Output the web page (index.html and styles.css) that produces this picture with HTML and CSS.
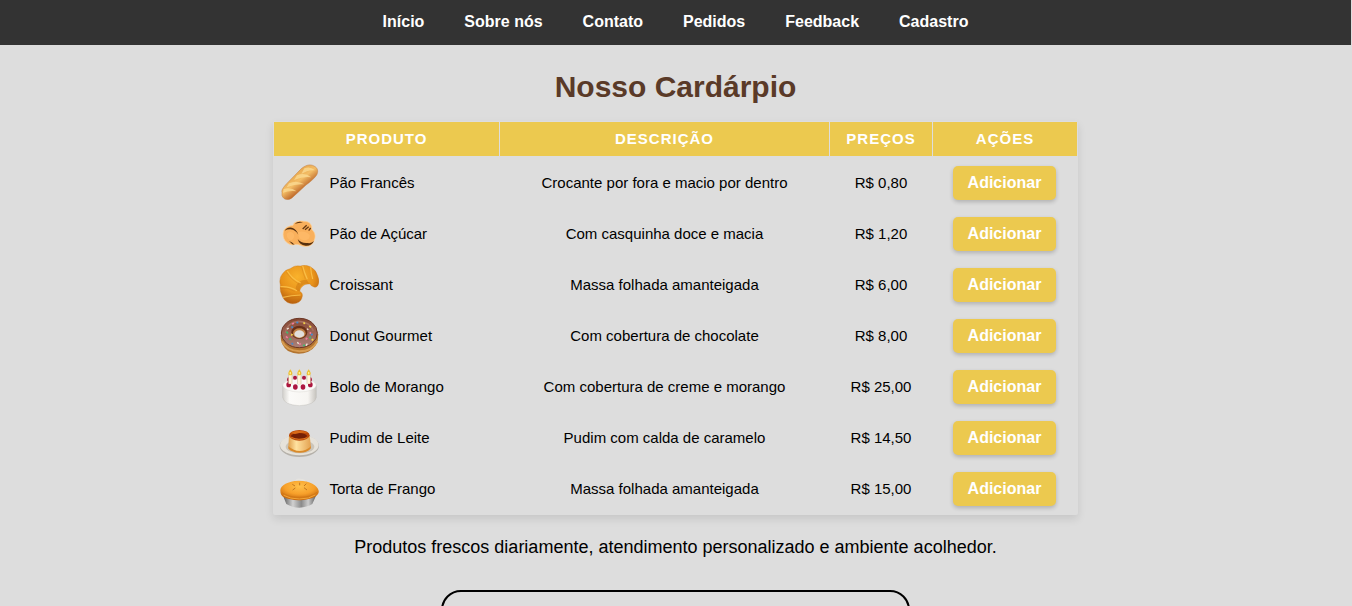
FILE: index.html
```html
<!DOCTYPE html>
<html lang="pt-BR">
<head>
<meta charset="utf-8">
<title>Nosso Cardárpio</title>
<link rel="stylesheet" href="styles.css">
</head>
<body>
<nav class="nav">
<a>Início</a><a>Sobre nós</a><a>Contato</a><a>Pedidos</a><a>Feedback</a><a>Cadastro</a>
</nav>
<main class="page">
<h1 class="title">Nosso Cardárpio</h1>
<div class="menu">
<table class="table">
<colgroup><col class="c1"><col class="c2"><col class="c3"><col class="c4"></colgroup>
<thead><tr><th>Produto</th><th>Descrição</th><th>Preços</th><th>Ações</th></tr></thead>
<tbody>
<tr><td><div class="product">
<svg class="icon" viewBox="27 15 120 120"><defs>
<linearGradient id="bread" gradientUnits="userSpaceOnUse" x1="70" y1="50" x2="104" y2="94"><stop offset="0" stop-color="#e9aa51"/><stop offset=".45" stop-color="#f3bd66"/><stop offset="1" stop-color="#b96025"/></linearGradient>
<radialGradient id="crust" cx=".45" cy=".3" r=".7"><stop offset="0" stop-color="#f9b22c"/><stop offset=".6" stop-color="#e8921a"/><stop offset="1" stop-color="#b8600e"/></radialGradient>
<radialGradient id="pie" cx=".5" cy=".3" r=".65"><stop offset="0" stop-color="#ffc04a"/><stop offset=".6" stop-color="#f7a02a"/><stop offset="1" stop-color="#cb6d10"/></radialGradient>
<linearGradient id="choc" x1="0" y1="0" x2="0" y2="1"><stop offset="0" stop-color="#84452f"/><stop offset=".5" stop-color="#9c6455"/><stop offset="1" stop-color="#a98078"/></linearGradient>
<linearGradient id="cream" x1="0" y1="0" x2="1" y2="0"><stop offset="0" stop-color="#d2d0cc"/><stop offset=".2" stop-color="#fbfaf8"/><stop offset=".75" stop-color="#f7f5f2"/><stop offset="1" stop-color="#c6c3be"/></linearGradient>
<linearGradient id="flan" x1="0" y1="0" x2="1" y2="0"><stop offset="0" stop-color="#e0a04d"/><stop offset=".35" stop-color="#ffe2a0"/><stop offset="1" stop-color="#e3a150"/></linearGradient>
<linearGradient id="tin" x1="0" y1="0" x2="1" y2="0"><stop offset="0" stop-color="#555"/><stop offset=".3" stop-color="#d0d0d0"/><stop offset=".55" stop-color="#8a8a8a"/><stop offset=".75" stop-color="#ccc"/><stop offset="1" stop-color="#555"/></linearGradient>
</defs>
<path d="M36 103C34 96 40 88 50 77L92 34C104 22 120 17 132 24C143 29 146 40 140 51C134 61 120 72 108 81L70 116C58 129 40 127 36 112Z" fill="url(#bread)" stroke="#c07a3a" stroke-width="1.5"/>
<path d="M103 31Q120 24 135 37Q114 34 94 48ZM81 52Q104 42 124 58Q101 54 72 66ZM57 76Q80 65 103 79Q79 76 50 88ZM41 93Q63 87 80 100Q58 97 39 104Z" fill="#fbdc96" opacity=".75"/>
</svg><span>Pão Francês</span></div></td><td>Crocante por fora e macio por dentro</td><td>R$ 0,80</td><td class="action"><button class="add">Adicionar</button></td></tr>
<tr><td><div class="product">
<svg class="icon" viewBox="27 15 120 120">
<path d="M40 69C43 55 60 50 69 49C72 36 90 34 102 37C119 36 128 50 125 61C137 71 138 85 131 98C125 113 106 116 91 109C83 105 78 106 67 108C48 105 36 88 40 69Z" fill="#f9b05c" stroke="#ffd39c" stroke-width="2"/>
<path d="M50 75Q58 65 69 72Q78 82 66 93Q51 94 50 75M84 69Q105 64 119 78Q121 92 103 94Q83 91 84 69" fill="#ffbd6b" opacity=".65"/>
<path d="M44 65Q52 53 66 56Q80 61 85 77Q77 63 62 61Q52 60 44 65ZM74 44Q86 35 99 40Q86 42 74 44ZM83 90Q94 104 113 102Q125 104 132 96Q125 111 107 110Q88 108 83 90ZM57 96Q67 99 74 107L67 106Z" fill="#56300f"/>
<path d="M98 60L110 49M105 62L116 53M116 65L122 57" stroke="#653711" stroke-width="4"/>
</svg><span>Pão de Açúcar</span></div></td><td>Com casquinha doce e macia</td><td>R$ 1,20</td><td class="action"><button class="add">Adicionar</button></td></tr>
<tr><td><div class="product">
<svg class="icon" viewBox="27 15 120 120">
<path d="M60 26Q75 14 91 18Q107 12 121 20Q138 29 143 47Q150 64 144 76Q139 85 130 80Q120 76 121 72L116 72C103 71 91 82 89 94C96 98 98 102 97 109Q94 126 78 130C58 135 43 124 37 109Q28 93 31 75Q26 55 37 42Q45 29 60 26Z" fill="url(#crust)" stroke="#c5741a" stroke-width="1"/>
<path d="M118 72C102 66 87 80 89 94L78 91C74 73 90 58 110 59Z" fill="#b9650c" opacity=".35"/>
<path d="M52 33Q65 56 92 69M31 80Q57 78 81 92M98 18Q103 38 112 58M122 22Q123 40 128 57M39 112Q63 106 92 105" fill="none" stroke="#fcc550" stroke-width="3.5" opacity=".8"/>
<path d="M49 37Q61 58 87 73M32 85Q55 82 74 94M95 21Q99 40 106 57M42 117Q65 111 88 109" fill="none" stroke="#bf6912" stroke-width="2" opacity=".4"/>
</svg><span>Croissant</span></div></td><td>Massa folhada amanteigada</td><td>R$ 6,00</td><td class="action"><button class="add">Adicionar</button></td></tr>
<tr><td><div class="product">
<svg class="icon" viewBox="27 15 120 120">
<path d="M32 72Q31 103 54 120Q84 135 115 122Q146 107 145 69Z" fill="#b3742f"/>
<path d="M36 91Q49 118 88 121Q127 121 142 91" fill="none" stroke="#d79c52" stroke-width="6"/>
<ellipse cx="88" cy="66" rx="54" ry="44" fill="url(#choc)" stroke="#6d3826" stroke-width="3"/>
<path d="M46 66Q50 35 85 31Q120 32 130 59" fill="none" stroke="#a6705f" stroke-width="5"/>
<ellipse cx="88" cy="64" rx="24" ry="20" fill="#693018"/><ellipse cx="88" cy="67" rx="19" ry="15" fill="#c08145"/><ellipse cx="88" cy="69" rx="15" ry="11" fill="#e1dfdc"/>
<path d="M49 62l5 5M57 84l7 1M119 82l3-5M99 104l6-2" stroke="#42b86f" stroke-width="5"/><path d="M66 39l6-2M48 76l5 5M107 85l5-4M88 101l4-4M119 64l4 4" stroke="#f07a9c" stroke-width="5"/><path d="M65 46l3 5M79 34l6 1M123 72l5-3M65 96l4 4" stroke="#418bd0" stroke-width="5"/><path d="M101 34l3 5M118 45l5 4M64 74l3-5M125 88l5-3" stroke="#f6d649" stroke-width="5"/><path d="M82 94l4 4M108 104l4-6M111 53l4 3M51 55l5-4" stroke="#f5e9dd" stroke-width="4"/>
</svg><span>Donut Gourmet</span></div></td><td>Com cobertura de chocolate</td><td>R$ 8,00</td><td class="action"><button class="add">Adicionar</button></td></tr>
<tr><td><div class="product">
<svg class="icon" viewBox="27 15 120 120">
<path d="M38 70V106Q42 129 88 131Q135 129 139 106V70Z" fill="url(#cream)" stroke="#b7b3ad" stroke-width="1"/>
<ellipse cx="88.5" cy="70" rx="50" ry="20" fill="#faf9f7" stroke="#cecac4"/>
<g fill="#ad173f"><circle cx="75" cy="47" r="6"/><circle cx="102" cy="47" r="6"/><ellipse cx="57" cy="53" rx="6" ry="7"/><ellipse cx="120" cy="53" rx="6" ry="7"/><ellipse cx="56" cy="68" rx="7" ry="8"/><ellipse cx="76" cy="75" rx="7" ry="8"/><ellipse cx="99" cy="75" rx="7" ry="8"/><ellipse cx="121" cy="68" rx="7" ry="8"/></g>
<path d="M61 39V65M88 39V67M116 39V65" stroke="#d2c5a7" stroke-width="12"/><path d="M61 39V65M88 39V67M116 39V65" stroke="#fff5dc" stroke-width="8"/>
<path d="M61 22Q72 36 64 40H57Q51 35 61 22M88 22Q99 36 91 40H84Q78 35 88 22M116 22Q127 36 119 40H112Q106 35 116 22" fill="#edbf32"/><path d="M61 30v7M88 30v7M116 30v7" stroke="#fff08b" stroke-width="4"/>
</svg><span>Bolo de Morango</span></div></td><td>Com cobertura de creme e morango</td><td>R$ 25,00</td><td class="action"><button class="add">Adicionar</button></td></tr>
<tr><td><div class="product">
<svg class="icon" viewBox="27 15 120 120">
<ellipse cx="88" cy="99" rx="59" ry="33" fill="#b5b1aa"/><ellipse cx="88" cy="96" rx="58" ry="31" fill="#e6e2da"/><ellipse cx="90" cy="101" rx="43" ry="20" fill="#cbc5ba"/>
<path d="M57 68L55 102Q67 118 90 118Q113 117 123 102L119 68Z" fill="url(#flan)"/>
<path d="M55 100Q71 114 89 114Q109 114 123 100L122 107Q109 120 88 119Q66 118 55 107Z" fill="#d98a2b"/>
<ellipse cx="88" cy="67" rx="31" ry="16" fill="#b94708"/><ellipse cx="87" cy="69" rx="24" ry="9" fill="#752006"/><path d="M62 60Q87 46 114 60Q95 57 75 63Z" fill="#d96a18"/><path d="M64 73Q86 84 112 74" fill="none" stroke="#df761f" stroke-width="3"/>
</svg><span>Pudim de Leite</span></div></td><td>Pudim com calda de caramelo</td><td>R$ 14,50</td><td class="action"><button class="add">Adicionar</button></td></tr>
<tr><td><div class="product">
<svg class="icon" viewBox="27 15 120 120">
<path d="M38 92L49 120Q67 131 88 131Q111 130 127 120L140 91Z" fill="url(#tin)"/>
<path d="M31 79C31 64 55 51 84 50C117 49 143 64 146 80Q148 91 135 98C114 111 62 112 42 100Q31 95 31 79Z" fill="url(#pie)"/>
<path d="M36 86Q55 100 88 100Q123 100 142 84" fill="none" stroke="#cf7613" stroke-width="2.5" opacity=".8"/><path d="M41 94Q61 105 88 105Q118 105 136 93" fill="none" stroke="#f2a638" stroke-width="3"/>
<path d="M67 61l8 5M89 56v8M109 59l-7 7M68 78l8-6M102 71l9 7" stroke="#c27720" stroke-width="3"/>
<path d="M74 50Q83 40 94 45Q103 43 107 52Q90 47 74 50" fill="#e5e3df"/>
</svg><span>Torta de Frango</span></div></td><td>Massa folhada amanteigada</td><td>R$ 15,00</td><td class="action"><button class="add">Adicionar</button></td></tr>
</tbody></table></div>
<p class="tagline">Produtos frescos diariamente, atendimento personalizado e ambiente acolhedor.</p>
<section class="panel"></section>
</main>
</body>
</html>
```
FILE: styles.css
```css
* { box-sizing: border-box; }
html { background: #ddd; overflow: hidden; }
body { margin: 0; width: 1351px; height: 606px; overflow: hidden; font-family: "Liberation Sans", Arial, sans-serif; color: #000; }
.nav { height: 45px; background: #333; display: flex; justify-content: center; gap: 40px; padding-top: 13px; font-weight: bold; font-size: 16px; line-height: 18px; color: #fff; }
.page { display: flex; flex-direction: column; align-items: center; height: 561px; overflow: hidden; }
.page > * { flex-shrink: 0; }
.title { margin: 23px 0 16px; font-size: 30px; line-height: 37px; color: #5a3a28; }
.menu { width: 805px; height: 394px; padding: 1px; border-radius: 2px; box-shadow: 0 4px 8px rgba(0,0,0,.1); }
.table { width: 803px; table-layout: fixed; border-collapse: separate; border-spacing: 0; font-size: 15px; line-height: 17px; text-align: center; }
.c1 { width: 226px; }
.c2 { width: 330px; }
.c3 { width: 103px; }
.c4 { width: 144px; }
th { height: 35px; padding: 0 0 1px; background: #ecc94f; border-right: 1px solid #ddd; border-bottom: 1px solid #ddd; color: #fff; text-transform: uppercase; letter-spacing: 1px; }
th:last-child { border-right: 0; }
td { height: 51px; padding: 0 1px 0 0; }
td.action { padding-top: 1px; }
.product { display: flex; align-items: center; gap: 10.5px; padding: 1px 0 0 5px; }
.product span { margin-top: -2px; }
.icon { display: block; width: 40px; height: 40px; }
.add { display: block; width: 103px; height: 34px; margin: 0 auto; padding: 0; border: 0; border-radius: 5px; background: #ecc94f; color: #fff; font: bold 16px "Liberation Sans", Arial, sans-serif; box-shadow: 0 2px 4px rgba(0,0,0,.2); }
.tagline { margin: 22px 0 0; font-size: 18px; line-height: 21px; }
.panel { width: 469px; height: 100px; margin-top: 32px; border: 2px solid #000; border-radius: 20px; }
```
